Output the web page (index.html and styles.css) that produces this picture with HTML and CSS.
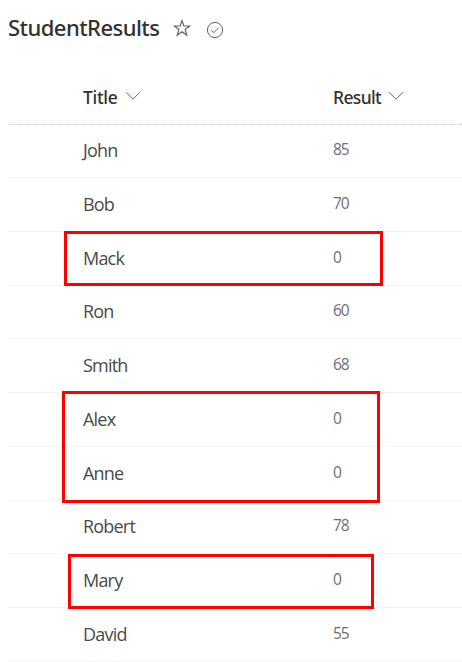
FILE: index.html
```
<!DOCTYPE html>
<html lang="en">
<head>
<meta charset="utf-8">
<title>StudentResults</title>
<link rel="stylesheet" href="styles.css">
</head>
<body>
<main class="page">
  <header class="list-header">
    <h1 class="list-title">StudentResults</h1>
    <svg class="star" width="18" height="18" viewBox="0 0 18 18"><path d="M9 1.6 10.9 7H16.7L12.1 10.5 13.8 16.2 9 12.8 4.2 16.2 5.9 10.5 1.3 7H7.1Z"/></svg>
    <svg class="check" width="18" height="18" viewBox="0 0 18 18"><circle cx="9" cy="9" r="7.6"/><path d="M5.2 9.2 7.8 11.6 12.8 6.5"/></svg>
  </header>
  <section class="list">
    <div class="columns">
      <div class="column title-head">Title<svg class="chevron" width="16" height="10" viewBox="0 0 16 10"><path d="M1 1.2 8 8.2 15 1.2"/></svg></div>
      <div class="column result-head">Result<svg class="chevron" width="16" height="10" viewBox="0 0 16 10"><path d="M1 1.2 8 8.2 15 1.2"/></svg></div>
    </div>
    <div class="row short"><span class="name">John</span><span class="result">85</span></div>
    <div class="row"><span class="name">Bob</span><span class="result">70</span></div>
    <div class="row"><span class="name">Mack</span><span class="result">0</span></div>
    <div class="row short"><span class="name">Ron</span><span class="result">60</span></div>
    <div class="row"><span class="name">Smith</span><span class="result">68</span></div>
    <div class="row"><span class="name">Alex</span><span class="result">0</span></div>
    <div class="row"><span class="name">Anne</span><span class="result">0</span></div>
    <div class="row short"><span class="name">Robert</span><span class="result">78</span></div>
    <div class="row"><span class="name">Mary</span><span class="result">0</span></div>
    <div class="row"><span class="name">David</span><span class="result">55</span></div>
  </section>
  <div class="mark mark-mack"></div>
  <div class="mark mark-alex-anne"></div>
  <div class="mark mark-mary"></div>
</main>
</body>
</html>
```
FILE: styles.css
```
* { box-sizing: border-box; }
body {
  margin: 0;
  background: #fff;
  color: #323130;
  font-family: "Noto Sans", "Open Sans", sans-serif;
}
.page {
  position: relative;
  height: 662px;
  padding-left: 8px;
  overflow: hidden;
}
.list-header {
  display: flex;
  align-items: center;
  height: 58px;
}
.list-title {
  width: 165px;
  margin: -4px 0 0;
  font-size: 22px;
  font-weight: 500;
  line-height: 30px;
  letter-spacing: -0.54px;
  white-space: nowrap;
}
svg {
  flex: none;
  fill: none;
  stroke: #65635f;
  stroke-width: 1;
}
.star { margin-top: -2px; stroke-width: 1.2; }
.check { margin: 1px 0 0 15px; }
.columns {
  display: grid;
  grid-template-columns: 250px 1fr;
  align-items: center;
  height: 67px;
  padding: 12px 0 0 75px;
  border-bottom: 1px dotted #d0d0d0;
}
.column {
  display: flex;
  align-items: center;
  font-size: 17.5px;
  font-weight: 500;
  line-height: 24px;
  letter-spacing: -0.65px;
}
.title-head { letter-spacing: -0.3px; }
.chevron { margin: -2px 0 0 7px; }
.row {
  display: grid;
  grid-template-columns: 250px 1fr;
  align-items: end;
  height: 54px;
  padding: 0 0 15px 75px;
  border-bottom: 1px solid #f3f3f3;
}
.short { height: 53px; }
.name {
  font-family: "Open Sans", sans-serif;
  font-size: 18px;
  font-weight: 400;
  line-height: 24px;
  letter-spacing: -0.8px;
  color: #4a4a4a;
}
.result {
  padding-bottom: 3px;
  font-family: "Open Sans", sans-serif;
  font-size: 15.5px;
  line-height: 20px;
  letter-spacing: -1px;
  color: #707070;
}
.mark {
  position: absolute;
  border: 3px solid #f00;
}
.mark-mack { left: 64px; top: 231px; width: 319px; height: 55px; }
.mark-alex-anne { left: 62px; top: 391px; width: 318px; height: 112px; }
.mark-mary { left: 68px; top: 554px; width: 306px; height: 55px; }
```
